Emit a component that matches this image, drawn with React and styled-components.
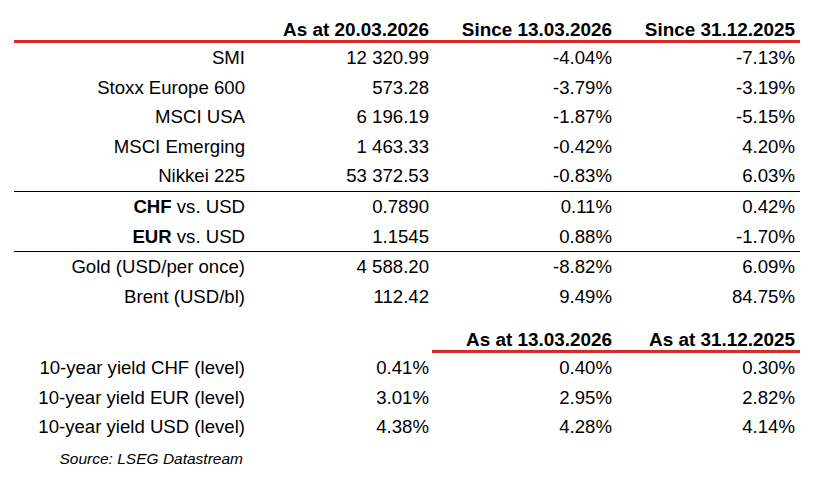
import React from "react";
import styled, { createGlobalStyle } from "styled-components";

const Global = createGlobalStyle`
  html, body { margin: 0; padding: 0; background: #fff; }
  body { font-family: "Liberation Sans", Arial, sans-serif; color: #000; }
`;

const RED = "#d52b27";

const Table = styled.div`
  width: 786px;
  margin-left: 14px;
  font-size: 18.6px;
`;

const Grid = styled.div`
  display: grid;
  grid-template-columns: 231px 184px 183px 183px;
  padding-right: 5px;
`;

const HeaderRow = styled(Grid)`
  height: 40px;
  align-items: end;
  line-height: 20px;
  font-weight: bold;
  font-size: 18.9px;
  border-bottom: 3px solid ${RED};
`;

const SubHeaderRow = styled.div`
  display: grid;
  grid-template-columns: 180px 183px;
  padding-right: 5px;
  margin-left: 418px;
  height: 38.6px;
  align-items: end;
  line-height: 20px;
  font-weight: bold;
  font-size: 18.9px;
  border-bottom: 3px solid ${RED};
`;

const Row = styled(Grid)`
  height: 29.6px;
  line-height: 29.6px;
  border-top: ${(p) => (p.$divider ? "1px solid #000" : "none")};
`;

const Cell = styled.div`
  text-align: right;
  white-space: nowrap;
`;

const Strong = styled.b`
  font-weight: bold;
`;

const Source = styled.div`
  width: 231px;
  text-align: right;
  font-style: italic;
  font-size: 15.5px;
  line-height: 34px;
  padding-right: 2px;
  box-sizing: border-box;
`;

const top = [
  ["SMI", "12 320.99", "-4.04%", "-7.13%"],
  ["Stoxx Europe 600", "573.28", "-3.79%", "-3.19%"],
  ["MSCI USA", "6 196.19", "-1.87%", "-5.15%"],
  ["MSCI Emerging", "1 463.33", "-0.42%", "4.20%"],
  ["Nikkei 225", "53 372.53", "-0.83%", "6.03%"],
];

const fx = [
  ["CHF", "0.7890", "0.11%", "0.42%"],
  ["EUR", "1.1545", "0.88%", "-1.70%"],
];

const comm = [
  ["Gold (USD/per once)", "4 588.20", "-8.82%", "6.09%"],
  ["Brent (USD/bl)", "112.42", "9.49%", "84.75%"],
];

const yields = [
  ["10-year yield CHF (level)", "0.41%", "0.40%", "0.30%"],
  ["10-year yield EUR (level)", "3.01%", "2.95%", "2.82%"],
  ["10-year yield USD (level)", "4.38%", "4.28%", "4.14%"],
];

const DataRow = ({ r, divider, label }) => (
  <Row $divider={divider}>
    <Cell>{label || r[0]}</Cell>
    <Cell>{r[1]}</Cell>
    <Cell>{r[2]}</Cell>
    <Cell>{r[3]}</Cell>
  </Row>
);

export default function App() {
  return (
    <>
      <Global />
      <Table>
        <HeaderRow>
          <Cell />
          <Cell>As at 20.03.2026</Cell>
          <Cell>Since 13.03.2026</Cell>
          <Cell>Since 31.12.2025</Cell>
        </HeaderRow>
        {top.map((r) => (
          <DataRow key={r[0]} r={r} />
        ))}
        {fx.map((r, i) => (
          <DataRow
            key={r[0]}
            r={r}
            divider={i === 0}
            label={
              <>
                <Strong>{r[0]}</Strong> vs. USD
              </>
            }
          />
        ))}
        {comm.map((r, i) => (
          <DataRow key={r[0]} r={r} divider={i === 0} />
        ))}
        <SubHeaderRow>
          <Cell>As at 13.03.2026</Cell>
          <Cell>As at 31.12.2025</Cell>
        </SubHeaderRow>
        {yields.map((r) => (
          <DataRow key={r[0]} r={r} />
        ))}
        <Source>Source: LSEG Datastream</Source>
      </Table>
    </>
  );
}
